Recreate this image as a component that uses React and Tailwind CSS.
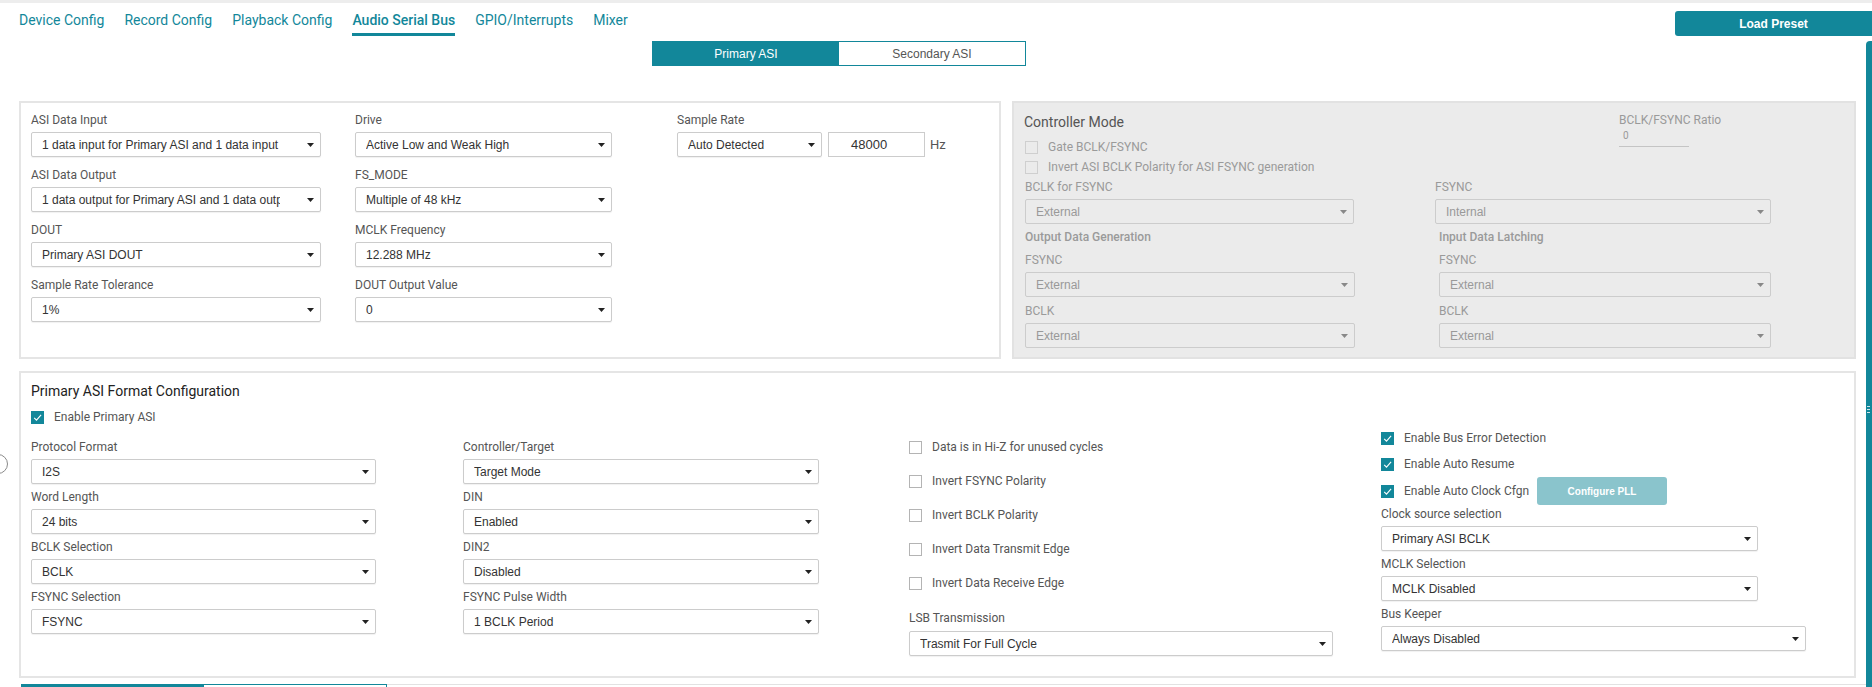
import React from 'react'

const tabs = ['Device Config', 'Record Config', 'Playback Config', 'Audio Serial Bus', 'GPIO/Interrupts', 'Mixer']

function Arrow({ disabled }) {
    return (
        <svg width="7" height="4" viewBox="0 0 7 4" className={disabled ? 'text-[#888]' : 'text-[#222]'}>
            <path d="M0 0h7L3.5 4z" fill="currentColor" />
        </svg>
    )
}

function Select({ value, width, disabled }) {
    return (
        <div
            className={`flex items-center h-[25px] border border-[#cccccc] rounded-[2px] pl-[10px] pr-[6px] ${width} ${disabled ? 'bg-[#ebebeb] text-[#999]' : 'bg-white text-[#333] shadow-[0_1px_1px_rgba(0,0,0,0.06)]'}`}
        >
            <span className="flex-1 min-w-0 mr-[27px] overflow-hidden whitespace-nowrap font-['Liberation_Sans',sans-serif] text-[12px] leading-[16px]">
                {value}
            </span>
            <Arrow disabled={disabled} />
        </div>
    )
}

function Check({ label, checked, disabled }) {
    return (
        <div className="flex items-center h-[16px] gap-[10px]">
            {checked ? (
                <div className="w-[13px] h-[13px] bg-[#12879a] flex items-center justify-center">
                    <svg width="11" height="11" viewBox="0 0 11 11">
                        <path d="M2.2 5.8l2.3 2.4 4.6-5.4" fill="none" stroke="white" strokeWidth="1.1" />
                    </svg>
                </div>
            ) : (
                <div className={`w-[13px] h-[13px] border ${disabled ? 'border-[#cfcfcf]' : 'border-[#b4b4b4] bg-white'}`} />
            )}
            <span className={`text-[12px] leading-[16px] whitespace-nowrap ${disabled ? 'text-[#9a9a9a]' : 'text-[#555]'}`}>{label}</span>
        </div>
    )
}

// top panel field: 55px pitch
function TopField({ label, value, width }) {
    return (
        <div className="mb-[9px]">
            <div className="leading-[18px]">{label}</div>
            <div className="mt-[3px]">
                <Select value={value} width={width} />
            </div>
        </div>
    )
}

// format panel field: 50px pitch
function Field({ label, value, width, className = '' }) {
    return (
        <div className={className}>
            <div className="leading-[16px]">{label}</div>
            <div className="mt-[4px]">
                <Select value={value} width={width} />
            </div>
        </div>
    )
}

export default function App() {
    return (
        <div className="relative w-[1872px] h-[687px] overflow-hidden bg-white font-['Roboto',sans-serif] text-[12px] text-[#555]">
            <div className="h-[3px] bg-[#ededed]" />

            {/* Header */}
            <div className="flex items-start justify-between pl-[19px] h-[33px]">
                <nav className="flex gap-[20px] text-[14px] text-[#12879a]">
                    {tabs.map((t) => (
                        <div
                            key={t}
                            className={
                                t === 'Audio Serial Bus'
                                    ? 'pt-[7px] h-[33px] leading-[20px] font-medium border-b-[3px] border-[#12879a]'
                                    : 'pt-[7px] h-[33px] leading-[20px]'
                            }
                        >
                            {t}
                        </div>
                    ))}
                </nav>
                <button className="mt-[8px] h-[25px] w-[197px] rounded-l-[3px] bg-[#12879a] text-white font-bold text-[12px] font-['Liberation_Sans',sans-serif]">
                    Load Preset
                </button>
            </div>

            {/* ASI switch */}
            <div className="mt-[5px] ml-[652px] flex w-[374px] h-[25px] border border-[#12879a] font-['Liberation_Sans',sans-serif] text-[12px]">
                <div className="w-[186px] bg-[#12879a] text-white flex items-center justify-center">Primary ASI</div>
                <div className="flex-1 bg-white text-[#555] flex items-center justify-center">Secondary ASI</div>
            </div>

            {/* Top panels */}
            <div className="mt-[35px] pl-[19px] flex gap-[11px]">
                <div className="w-[982px] h-[258px] border-2 border-[#e5e5e5] pt-[8px] pl-[10px] flex">
                    <div className="w-[290px]">
                        <TopField label="ASI Data Input" value="1 data input for Primary ASI and 1 data input for Secondary ASI" width="w-[290px]" />
                        <TopField label="ASI Data Output" value="1 data output for Primary ASI and 1 data output for Secondary ASI" width="w-[290px]" />
                        <TopField label="DOUT" value="Primary ASI DOUT" width="w-[290px]" />
                        <TopField label="Sample Rate Tolerance" value="1%" width="w-[290px]" />
                    </div>
                    <div className="w-[257px] ml-[34px]">
                        <TopField label="Drive" value="Active Low and Weak High" width="w-[257px]" />
                        <TopField label="FS_MODE" value="Multiple of 48 kHz" width="w-[257px]" />
                        <TopField label="MCLK Frequency" value="12.288 MHz" width="w-[257px]" />
                        <TopField label="DOUT Output Value" value="0" width="w-[257px]" />
                    </div>
                    <div className="ml-[65px]">
                        <div className="leading-[18px]">Sample Rate</div>
                        <div className="mt-[3px] flex items-center">
                            <Select value="Auto Detected" width="w-[145px]" />
                            <div className="ml-[6px] w-[97px] h-[25px] border border-[#cccccc] pl-[22px] flex items-center font-['Liberation_Sans',sans-serif] text-[13px] text-[#333]">
                                48000
                            </div>
                            <span className="ml-[5px] text-[13px]">Hz</span>
                        </div>
                    </div>
                </div>

                <div className="w-[844px] h-[258px] border-2 border-[#e2e2e2] bg-[#ebebeb] pt-[9px] pl-[10px] text-[#9a9a9a]">
                    <div className="flex">
                        <div className="w-[595px]">
                            <div className="text-[14px] leading-[20px] text-[#555]">Controller Mode</div>
                            <div className="mt-[7px] flex flex-col gap-[4px] pl-[1px]">
                                <Check disabled label="Gate BCLK/FSYNC" />
                                <Check disabled label="Invert ASI BCLK Polarity for ASI FSYNC generation" />
                            </div>
                        </div>
                        <div>
                            <div className="leading-[16px]">BCLK/FSYNC Ratio</div>
                            <div className="mt-[2px] w-[70px] h-[17px] border-b border-[#c4c4c4] pl-[4px] text-[10px] leading-[12px]">0</div>
                        </div>
                    </div>

                    <div className="flex mt-[4px]">
                        <div className="w-[411px] pl-[1px]">
                            <div className="leading-[16px]">BCLK for FSYNC</div>
                            <div className="mt-[4px]">
                                <Select disabled value="External" width="w-[329px]" />
                            </div>
                            <div className="mt-[5px] leading-[16px] font-medium">Output Data Generation</div>
                            <div className="mt-[7px] leading-[16px]">FSYNC</div>
                            <div className="mt-[4px]">
                                <Select disabled value="External" width="w-[330px]" />
                            </div>
                            <div className="mt-[6px] leading-[16px]">BCLK</div>
                            <div className="mt-[4px]">
                                <Select disabled value="External" width="w-[330px]" />
                            </div>
                        </div>
                        <div>
                            <div className="leading-[16px]">FSYNC</div>
                            <div className="mt-[4px]">
                                <Select disabled value="Internal" width="w-[336px]" />
                            </div>
                            <div className="pl-[4px]">
                                <div className="mt-[5px] leading-[16px] font-medium">Input Data Latching</div>
                                <div className="mt-[7px] leading-[16px]">FSYNC</div>
                                <div className="mt-[4px]">
                                    <Select disabled value="External" width="w-[332px]" />
                                </div>
                                <div className="mt-[6px] leading-[16px]">BCLK</div>
                                <div className="mt-[4px]">
                                    <Select disabled value="External" width="w-[332px]" />
                                </div>
                            </div>
                        </div>
                    </div>
                </div>
            </div>

            {/* Primary ASI Format Configuration */}
            <div className="mt-[12px] ml-[19px] w-[1837px] h-[307px] border-2 border-[#e5e5e5] pt-[8px] pl-[10px]">
                <div className="text-[14px] leading-[20px] text-[#222]">Primary ASI Format Configuration</div>
                <div className="mt-[8px]">
                    <Check checked label="Enable Primary ASI" />
                </div>
                <div className="mt-[5px] flex">
                    <div className="w-[345px] pt-[9px]">
                        <Field label="Protocol Format" value="I2S" width="w-[345px]" />
                        <Field label="Word Length" value="24 bits" width="w-[345px]" className="mt-[5px]" />
                        <Field label="BCLK Selection" value="BCLK" width="w-[345px]" className="mt-[5px]" />
                        <Field label="FSYNC Selection" value="FSYNC" width="w-[345px]" className="mt-[5px]" />
                    </div>
                    <div className="w-[356px] ml-[87px] pt-[9px]">
                        <Field label="Controller/Target" value="Target Mode" width="w-[356px]" />
                        <Field label="DIN" value="Enabled" width="w-[356px]" className="mt-[5px]" />
                        <Field label="DIN2" value="Disabled" width="w-[356px]" className="mt-[5px]" />
                        <Field label="FSYNC Pulse Width" value="1 BCLK Period" width="w-[356px]" className="mt-[5px]" />
                    </div>
                    <div className="w-[424px] ml-[90px] pt-[9px]">
                        <div className="flex flex-col gap-[18px]">
                            <Check label="Data is in Hi-Z for unused cycles" />
                            <Check label="Invert FSYNC Polarity" />
                            <Check label="Invert BCLK Polarity" />
                            <Check label="Invert Data Transmit Edge" />
                            <Check label="Invert Data Receive Edge" />
                        </div>
                        <div className="mt-[19px] leading-[16px]">LSB Transmission</div>
                        <div className="mt-[5px]">
                            <Select value="Trasmit For Full Cycle" width="w-[424px]" />
                        </div>
                    </div>
                    <div className="w-[425px] ml-[48px]">
                        <Check checked label="Enable Bus Error Detection" />
                        <div className="mt-[10px]">
                            <Check checked label="Enable Auto Resume" />
                        </div>
                        <div className="mt-[5px] flex items-center h-[28px]">
                            <div className="w-[156px]">
                                <Check checked label="Enable Auto Clock Cfgn" />
                            </div>
                            <button className="w-[130px] h-[28px] rounded-[3px] bg-[#8ac4cc] text-white font-bold text-[10px] font-['Liberation_Sans',sans-serif]">
                                Configure PLL
                            </button>
                        </div>
                        <div className="mt-[1px] leading-[16px]">Clock source selection</div>
                        <div className="mt-[4px]">
                            <Select value="Primary ASI BCLK" width="w-[377px]" />
                        </div>
                        <div className="mt-[5px] leading-[16px]">MCLK Selection</div>
                        <div className="mt-[4px]">
                            <Select value="MCLK Disabled" width="w-[377px]" />
                        </div>
                        <div className="mt-[5px] leading-[16px]">Bus Keeper</div>
                        <div className="mt-[4px]">
                            <Select value="Always Disabled" width="w-[425px]" />
                        </div>
                    </div>
                </div>
            </div>

            {/* bottom tab strip */}
            <div className="mt-[6px] ml-[21px] flex items-start">
                <div className="w-[182px] h-[6px] bg-[#12879a]" />
                <div className="w-[184px] h-[6px] border-t border-x border-[#12879a]" />
                <div className="flex-1 h-[1px] bg-[#e2e2e2]" />
            </div>

            {/* collapse handle on the left edge */}
            <div className="absolute left-[-12px] top-[454px] w-[20px] h-[20px] rounded-full border border-[#8a8a8a] bg-white" />

            {/* right side rail */}
            <div className="absolute right-0 top-[41px] bottom-0 w-[6px] bg-[#12879a] rounded-tl-[4px]">
                <div className="mt-[365px] ml-[1px] flex flex-col gap-[2px]">
                    <div className="w-[3px] h-[1px] bg-[#cfe6ea]" />
                    <div className="w-[3px] h-[1px] bg-[#cfe6ea]" />
                    <div className="w-[3px] h-[1px] bg-[#cfe6ea]" />
                </div>
            </div>
        </div>
    )
}
